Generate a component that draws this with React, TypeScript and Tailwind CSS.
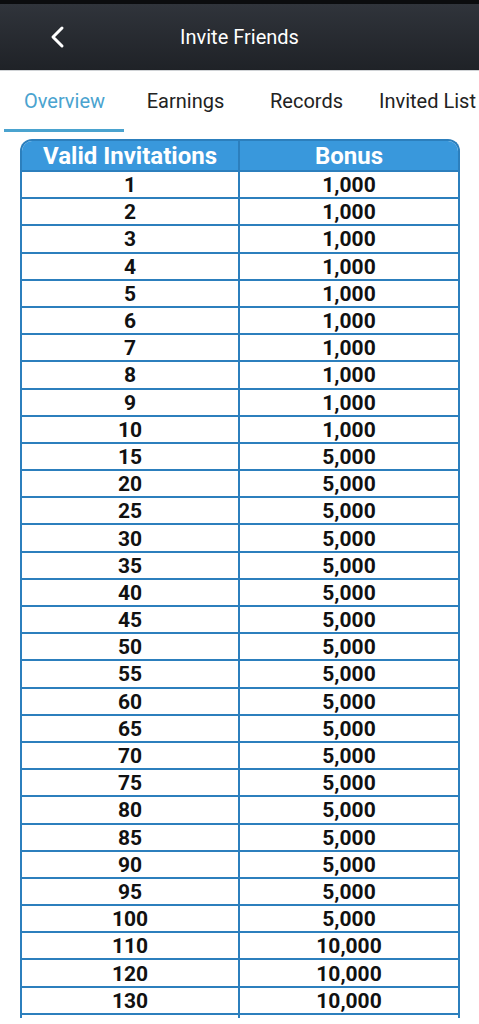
const rows: Array<[number, string]> = [
  ...Array.from({ length: 10 }, (_, i) => [i + 1, "1,000"] as [number, string]),
  ...Array.from({ length: 18 }, (_, i) => [15 + i * 5, "5,000"] as [number, string]),
  [110, "10,000"],
  [120, "10,000"],
  [130, "10,000"],
];

const tabs = ["Overview", "Earnings", "Records", "Invited List"];

export default function App() {
  return (
    <div className="w-[479px] h-[1024px] overflow-hidden bg-white font-['Roboto',sans-serif]">
      {/* top bar */}
      <div className="h-[4px] bg-[#0b0c0e]" />
      <div className="relative h-[66px] flex items-center justify-center bg-gradient-to-b from-[#30343b] to-[#1f2227]">
        <svg
          className="absolute left-[48px] top-[21px]"
          width="20"
          height="24"
          viewBox="0 0 20 24"
          fill="none"
          stroke="white"
          strokeWidth="3"
          strokeLinecap="round"
          strokeLinejoin="round"
        >
          <path d="M14 3 L5 12 L14 21" />
        </svg>
        <span className="text-[20px] text-white mt-[-1px]">Invite Friends</span>
      </div>

      {/* tabs */}
      <div className="flex h-[62px] pl-[4px] border-t border-[#d0d3d6]">
        {tabs.map((t, i) => (
          <div key={t} className="relative w-[121px] shrink-0 flex items-center justify-center">
            <span className={`text-[20px] whitespace-nowrap mt-[-2px] ${i === 0 ? "text-[#4aa3cf]" : "text-[#222]"}`}>{t}</span>
            {i === 0 && <div className="absolute left-0 right-[1px] bottom-0 h-[3px] bg-[#4aa3cf]" />}
          </div>
        ))}
      </div>

      {/* table */}
      <div className="mx-[20px] mt-[7px] w-[440px] border-2 border-b-0 border-[#2c7fbd] rounded-t-[12px] overflow-hidden">
        <div className="flex h-[31px] bg-[#3998dc] border-b-2 border-[#2c7fbd] text-white font-bold text-[24px] leading-none">
          <div className="w-[218px] flex items-center justify-center border-r-2 border-[#2c7fbd]">Valid Invitations</div>
          <div className="flex-1 flex items-center justify-center">Bonus</div>
        </div>
        {rows.map(([n, b]) => (
          <div key={n} className="flex h-[27.2px] border-b-2 border-[#2c7fbd] text-[21px] font-bold text-[#111] leading-none">
            <div className="w-[218px] flex items-center justify-center pt-[2px] border-r-2 border-[#2c7fbd]">{n}</div>
            <div className="flex-1 flex items-center justify-center pt-[2px]">{b}</div>
          </div>
        ))}
        <div className="flex h-[3px]">
          <div className="w-[218px] border-r-2 border-[#2c7fbd]" />
          <div className="flex-1" />
        </div>
      </div>
    </div>
  );
}
